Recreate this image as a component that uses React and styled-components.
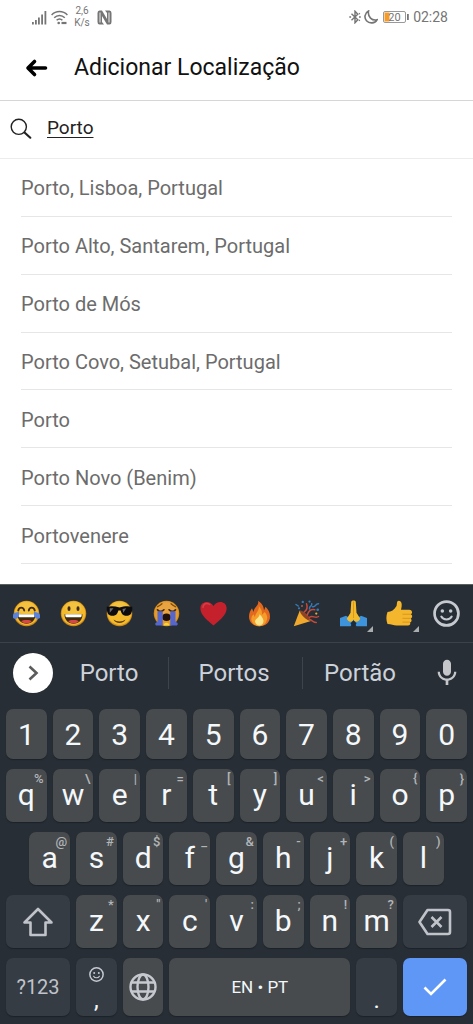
import { useState } from "react";
import styled, { createGlobalStyle } from "styled-components";
import { MdMic } from "react-icons/md";

const GlobalStyle = createGlobalStyle`
  * {
    box-sizing: border-box;
  }
  body {
    margin: 0;
    background: #fff;
    font-family: Roboto, "Liberation Sans", sans-serif;
  }
  button, input {
    font-family: inherit;
    border: 0;
    padding: 0;
    margin: 0;
    background: none;
    outline: none;
  }
  svg {
    display: block;
    flex: none;
  }
`;

const Page = styled.div`
  min-height: 100vh;
  display: flex;
  flex-direction: column;
`;

const StatusBar = styled.div`
  height: 34px;
  padding: 0 25px 0 32px;
  display: flex;
  align-items: center;
  justify-content: space-between;
  color: #757575;
`;

const StatusGroup = styled.div`
  display: flex;
  align-items: center;
  gap: ${(p) => p.$gap}px;
`;

const Speed = styled.div`
  width: 16px;
  margin: 0 3px 0 2px;
  font-size: 10px;
  line-height: 12px;
  text-align: center;
`;

const Clock = styled.time`
  font-size: 14px;
  line-height: 16px;
`;

const Header = styled.header`
  height: 67px;
  padding: 2px 25px 0;
  display: flex;
  align-items: center;
  gap: 25px;
  border-bottom: 1px solid #d6d6d6;
`;

const BackButton = styled.button`
  color: #000;
`;

const Title = styled.h1`
  margin: 0;
  font-size: 23px;
  line-height: 32px;
  font-weight: 400;
  color: #111;
`;

const SearchBar = styled.label`
  height: 58px;
  padding: 0 10px 2px;
  display: flex;
  align-items: center;
  gap: 15px;
  border-bottom: 1px solid #ececec;
`;

const SearchInput = styled.input`
  flex: 1;
  min-width: 0;
  height: 32px;
  padding-bottom: 2px;
  font-size: 19px;
  color: #222;
  text-decoration: underline;
  text-decoration-thickness: 1px;
  text-underline-offset: 3px;
`;

const Results = styled.ul`
  flex: 1;
  margin: 0;
  padding: 0 21px 20px;
  list-style: none;
  display: flex;
  flex-direction: column;
`;

const Result = styled.li`
  flex: 1;
  display: flex;
  border-bottom: 1px solid #e6e6e6;
`;

const ResultButton = styled.button`
  flex: 1;
  min-height: 48px;
  padding-top: 2px;
  font-size: 20px;
  text-align: left;
  color: #6c6c6c;
`;

const Keyboard = styled.section`
  background: #272e35;
  border-top: 1px solid #59605f;
`;

const EmojiBar = styled.div`
  height: 58px;
  padding: 0 6px;
  display: grid;
  grid-template-columns: repeat(10, 1fr);
  column-gap: 6px;
  border-bottom: 1px solid #3b4249;
`;

const EmojiButton = styled.button`
  position: relative;
  display: flex;
  align-items: center;
  justify-content: center;
  color: #c6cad0;
`;

const MoreCorner = styled.span`
  position: absolute;
  right: 1px;
  bottom: 10px;
  border-left: 6px solid transparent;
  border-bottom: 6px solid #a9adb0;
`;

const SuggestionBar = styled.div`
  height: 60px;
  display: grid;
  grid-template-columns: 53px 115fr 134fr 118fr 53px;
  align-items: center;
`;

const ExpandButton = styled.button`
  width: 40px;
  height: 40px;
  margin-left: 13px;
  border-radius: 50%;
  background: #fff;
  display: flex;
  align-items: center;
  justify-content: center;
`;

const Suggestion = styled.button`
  height: 32px;
  padding-right: 3px;
  font-size: 24px;
  line-height: 32px;
  color: #cdd1da;

  & + & {
    border-left: 1px solid #3d444b;
  }
`;

const VoiceButton = styled.button`
  display: flex;
  justify-content: center;
  color: #c4c6ca;
`;

const Keys = styled.div`
  padding: 6px 6px 8px;
  display: flex;
  flex-direction: column;
  gap: 10px;
`;

const KeyRow = styled.div`
  height: ${(p) => p.$height || 53}px;
  display: grid;
  grid-template-columns: repeat(20, 1fr);
  column-gap: 6px;
`;

const tones = {
  plain: "#484b4e",
  dark: "#353c44",
  accent: "#5e97f6",
};

const Key = styled.button`
  position: relative;
  grid-column: ${(p) => (p.$start ? p.$start + " / " : "")} span ${(p) => p.$span || 2};
  display: flex;
  flex-direction: column;
  align-items: center;
  justify-content: center;
  border-radius: 7px;
  background: ${(p) => tones[p.$tone || "plain"]};
  box-shadow: 0 1px 1px #1c2228;
  color: ${(p) => p.$color || "#f4f8fa"};
  font-size: ${(p) => p.$size || 30}px;
  line-height: 36px;
`;

const Letter = styled.span`
  padding-bottom: 2px;
`;

const Digit = styled.span`
  padding-top: 2px;
`;

const Hint = styled.span`
  position: absolute;
  top: 2px;
  right: 3px;
  font-size: 13px;
  font-weight: 500;
  line-height: 16px;
  color: #b1b5b8;
`;

const Punctuation = styled.span`
  margin-top: auto;
  font-size: 24px;
  line-height: 32px;
`;

const CommaSmile = styled.span`
  padding-top: 9px;
  color: #c6cad0;
`;

const places = [
  "Porto, Lisboa, Portugal",
  "Porto Alto, Santarem, Portugal",
  "Porto de Mós",
  "Porto Covo, Setubal, Portugal",
  "Porto",
  "Porto Novo (Benim)",
  "Portovenere",
];

const suggestions = ["Porto", "Portos", "Portão"];

const digits = ["1", "2", "3", "4", "5", "6", "7", "8", "9", "0"];

const topRow = [
  ["q", "%"], ["w", "\\"], ["e", "|"], ["r", "="], ["t", "["],
  ["y", "]"], ["u", "<"], ["i", ">"], ["o", "{"], ["p", "}"],
];

const homeRow = [
  ["a", "@"], ["s", "#"], ["d", "$"], ["f", "_"], ["g", "&"],
  ["h", "-"], ["j", "+"], ["k", "("], ["l", ")"],
];

const bottomRow = [
  ["z", "*"], ["x", '"'], ["c", "'"], ["v", ":"], ["b", ";"],
  ["n", "!"], ["m", "?"],
];

const Face = ({ color = "#f3bb2c" }) => (
  <>
    <circle cx="18" cy="18" r="17" fill="#cf8a1c" />
    <circle cx="18" cy="17.5" r="15.800" fill={color} />
    <ellipse cx="18" cy="11" rx="11" ry="8" fill="#fff" opacity=".1" />
  </>
);

const Grin = () => (
  <>
    <path d="M6 19h24c0 8-5 12.500-12 12.500S6 27 6 19z" fill="#422b0d" />
    <path d="M7 19h22c0 2.500-.500 4-1.500 4h-19C7.500 23 7 21.500 7 19z" fill="#fff" />
    <path d="M11 28.500c2-2.500 12-2.500 14 0-4 3.500-10 3.500-14 0z" fill="#d9464a" />
  </>
);

const emojis = [
  {
    name: "Lágrimas de alegria",
    art: (
      <>
        <Face />
        <Grin />
        <path d="M7 14c1-5 7-5 8 0M21 14c1-5 7-5 8 0" fill="none" stroke="#422b0d" strokeWidth="2.4" strokeLinecap="round" />
        <path d="M8 16c-6 0-9 3-8.500 6.500S6 26.500 7.500 22c.600-2 .500-4 .500-6zM28 16c6 0 9 3 8.500 6.500S30 26.500 28.500 22c-.600-2-.500-4-.500-6z" fill="#5a82dc" />
      </>
    ),
  },
  {
    name: "Sorriso",
    art: (
      <>
        <Face />
        <Grin />
        <ellipse cx="12" cy="11.500" rx="2" ry="3.200" fill="#422b0d" />
        <ellipse cx="24" cy="11.500" rx="2" ry="3.200" fill="#422b0d" />
      </>
    ),
  },
  {
    name: "Óculos de sol",
    art: (
      <>
        <Face />
        <path d="M10 26c4 3.500 12 3.500 16 0-2 6-14 6-16 0z" fill="#5b3a10" />
        <path d="M1 9c5-1 11-1 17 1 6-2 12-2 17-1v4c-1 6-3 8-8 8-4.500 0-6.500-3-7.500-7h-3C15.500 18 13.500 21 9 21c-5 0-7-2-8-8z" fill="#0d0d0f" />
        <path d="M5 11l5 0-5 6zM22 12l5-1-4 6z" fill="#6b6b70" />
      </>
    ),
  },
  {
    name: "Choro",
    art: (
      <>
        <Face color="#e59a2c" />
        <path d="M6 9c2-1 4-2 6-4M30 9c-2-1-4-2-6-4" fill="none" stroke="#7a4a10" strokeWidth="1.600" strokeLinecap="round" />
        <path d="M6 13c2 3 6 3 8.500 0M21.500 13c2.500 3 6.500 3 8.500 0" fill="none" stroke="#422b0d" strokeWidth="2.200" strokeLinecap="round" />
        <ellipse cx="18" cy="23" rx="6" ry="5" fill="#201208" />
        <path d="M6 15h7v19H4c-2-2-1-4 2-5zM23 15h7v14c3 1 4 3 2 5h-9z" fill="#5566cc" />
        <path d="M14 34c0-5 8-5 8 0z" fill="#f8d440" />
      </>
    ),
  },
  {
    name: "Coração",
    art: (
      <>
        <path d="M18 34C7 25 .500 19 .500 11 .500 1.500 13-.500 18 8c5-8.500 17.500-6.500 17.500 3C35.500 19 29 25 18 34z" fill="#c5212d" />
        <path d="M4 10c0-5 5-7 9-4" fill="none" stroke="#d23f48" strokeWidth="2" strokeLinecap="round" />
      </>
    ),
  },
  {
    name: "Fogo",
    art: (
      <>
        <path d="M16 1c5 3 8 8 8 13l2-5c4 4 6 8 6 13 0 8-6 13-14 13S4 30 4 22c0-5 2-8 4-11l2 5C11 9 18 7 16 1z" fill="#e2681f" />
        <path d="M17 8c4 5 5 8 4 12l4-4c3 4 4 7 3 10-1 5-5 9-10 9S8 32 7 26c0-3 1-5 3-7l2 4c0-6 6-8 5-15z" fill="#f59b28" />
        <path d="M18 19c5 5 6 8 5 11-1 3-3 4-5 4s-5-1-6-5c0-4 6-5 6-10z" fill="#fbe58c" />
      </>
    ),
  },
  {
    name: "Festa",
    art: (
      <>
        <path d="M9 14l15 14L1 35z" fill="#f0a92d" />
        <path d="M9 14c5 0 15 9 15 14-5 0-15-9-15-14z" fill="#8d4424" />
        <path d="M15 16c4-3 5-6 3-11M19 20c2-6 5-8 10-7M22 23c4-3 8 2 12-1M22 26c4 1 5 4 9 4" fill="none" stroke="#c64a3a" strokeWidth="2" strokeLinecap="round" />
        <path d="M22 12c-1-5 4-3 3-7M26 9c5 1 3-4 8-4M4 6l3 2" fill="none" stroke="#3579b8" strokeWidth="2" strokeLinecap="round" />
        <g fill="#3579b8">
          <circle cx="13" cy="2.500" r="1.600" />
          <circle cx="8" cy="11" r="1.500" />
          <circle cx="33" cy="13" r="1.800" />
          <circle cx="22" cy="2" r="1.500" />
        </g>
        <circle cx="31" cy="18" r="1.500" fill="#f0a92d" />
        <circle cx="12" cy="8" r="1.400" fill="#c64a3a" />
      </>
    ),
  },
  {
    name: "Mãos juntas",
    more: true,
    art: (
      <>
        <path d="M0 24l8-3 10 6 10-6 8 3v11H22l-4-5-4 5H0z" fill="#3d93dc" />
        <path d="M15 2c1-2 5-2 6 0l1 15 5 8c-2 4-5 5-8 3l-1-2-1 2c-3 2-6 1-8-3l5-8z" fill="#f3bb2c" />
        <path d="M18 2v22" stroke="#d8961c" strokeWidth="1.200" />
        <path d="M14 31l4-4 4 4-2 4h-4z" fill="#1d2a3a" />
      </>
    ),
  },
  {
    name: "Gosto",
    more: true,
    art: (
      <>
        <path d="M2 16c5 0 9-3 12-8 1-3 0-7 3-7 4 0 5 5 3 12h11c4 0 5 5 2 6 3 1 2 5 0 6 2 1 1 5-1 5 1 2 0 4-3 4H14c-4 0-7-2-12-2-2-5-2-11 0-16z" fill="#f3b62c" />
        <path d="M22 19h11M22 24.500h11M22 29.500h10" stroke="#d8961c" strokeWidth="1.300" />
      </>
    ),
  },
];

const SmileIcon = ({ size }) => (
  <svg width={size} height={size} viewBox="0 0 26 26" fill="none" stroke="currentColor" strokeWidth="2.600">
    <circle cx="13" cy="13" r="11.500" />
    <path d="M8 16c2 3.600 8 3.600 10 0" strokeWidth="2" strokeLinecap="round" />
    <circle cx="9" cy="10.500" r="1.700" fill="currentColor" stroke="none" />
    <circle cx="17" cy="10.500" r="1.700" fill="currentColor" stroke="none" />
  </svg>
);

const LetterKey = ({ letter, hint, start }) => (
  <Key type="button" $start={start}>
    <Letter>{letter}</Letter>
    <Hint>{hint}</Hint>
  </Key>
);

const Status = () => (
  <StatusBar>
    <StatusGroup $gap={4}>
      <svg width="15" height="15" viewBox="0 0 15 15" fill="currentColor">
        <path d="M0 12h1.800v2.500H0zM3 10h1.800v4.500H3zM6 7.500h1.800v7H6zM9.200 4.500H11v10H9.200zM12.500 1h1.800v13.500h-1.800z" />
      </svg>
      <svg width="17" height="15" viewBox="0 0 17 15" fill="none" stroke="currentColor" strokeWidth="1.500">
        <path d="M.600 5C5 .300 12 .300 16.400 5M3.200 7.800c3-3.200 7.600-3.200 10.600 0M5.600 10.300c1.800-1.800 4-1.800 5.800 0" />
        <circle cx="7.700" cy="13" r="1.300" fill="currentColor" stroke="none" />
        <path d="M10.500 13h5" strokeWidth="2.200" />
      </svg>
      <Speed>2,6 K/s</Speed>
      <svg width="15" height="15" viewBox="0 0 15 15" fill="currentColor">
        <path d="M2.500.500H5l5 8.500V3l-2-2.500h4.500q2 0 2 2.500v9q0 2.500-2 2.500H10L5 6v6l2 2.500H2.500q-2 0-2-2.500V3q0-2.500 2-2.500z" />
        <path d="M3 2.500v10M12 2.500v10" stroke="#fff" strokeWidth=".9" />
      </svg>
    </StatusGroup>
    <StatusGroup $gap={3}>
      <svg width="12" height="14" viewBox="0 0 12 14" fill="none" stroke="currentColor" strokeWidth="1.400">
        <path d="M2.500 3.800l6.300 6-2.800 3V1.200l2.800 3-6.300 6" />
        <path d="M.300 7h1.800M10 7h1.800M10 4l.8-.8M10 10l.8.8" />
      </svg>
      <svg width="14" height="14" viewBox="0 0 14 14" fill="none" stroke="currentColor" strokeWidth="1.600">
        <path d="M4.500 1C.500 3 0 8 2.500 10.700 5.500 14 11 13.500 13 9.800 8 11 3.500 7 4.500 1z" />
      </svg>
      <svg width="29" height="14" viewBox="2 0 29 14">
        <rect x="4.500" y="1.500" width="22" height="11" rx="1.500" fill="#fff" stroke="#999" />
        <path d="M5.500 2.500h5v9h-5z" fill="#f49b28" />
        <path d="M28 4h1.800v6H28z" fill="#777" />
        <text x="15.500" y="11" fontSize="11" textAnchor="middle" fill="#757575">20</text>
      </svg>
      <Clock>02:28</Clock>
    </StatusGroup>
  </StatusBar>
);

const App = () => {
  const [query, queryChange] = useState("Porto");

  return (
    <Page>
      <GlobalStyle />
      <Status />
      <Header>
        <BackButton type="button" aria-label="Voltar">
          <svg width="24" height="20" viewBox="0 0 24 20" fill="none" stroke="currentColor" strokeWidth="3.600" strokeLinecap="round" strokeLinejoin="round">
            <path d="M20.500 10H3.500M9.500 3.500L3 10l6.500 6.500" />
          </svg>
        </BackButton>
        <Title>Adicionar Localização</Title>
      </Header>
      <SearchBar>
        <svg width="22" height="22" viewBox="0 0 22 22" fill="none" stroke="#222">
          <circle cx="8.800" cy="8.800" r="7.600" strokeWidth="1.400" />
          <path d="M14.500 14.500l5.800 5.200" strokeWidth="2.200" strokeLinecap="round" />
        </svg>
        <SearchInput aria-label="Procurar" value={query} onChange={(e) => queryChange(e.target.value)} />
      </SearchBar>
      <Results>
        {places.map((place) => (
          <Result key={place}>
            <ResultButton type="button" onClick={() => queryChange(place)}>{place}</ResultButton>
          </Result>
        ))}
      </Results>

      <Keyboard>
        <EmojiBar>
          {emojis.map((emoji) => (
            <EmojiButton key={emoji.name} type="button" aria-label={emoji.name}>
              <svg width="27" height="27" viewBox="0 0 36 36">{emoji.art}</svg>
              {emoji.more && <MoreCorner />}
            </EmojiButton>
          ))}
          <EmojiButton type="button" aria-label="Mais emojis">
            <SmileIcon size={27} />
          </EmojiButton>
        </EmojiBar>

        <SuggestionBar>
          <ExpandButton type="button" aria-label="Expandir">
            <svg width="16" height="20" viewBox="0 0 16 20" fill="none" stroke="#5c5c5c" strokeWidth="2.600">
              <path d="M4.500 3.500L11.500 10l-7 6.500" />
            </svg>
          </ExpandButton>
          {suggestions.map((word) => (
            <Suggestion key={word} type="button" onClick={() => queryChange(word)}>{word}</Suggestion>
          ))}
          <VoiceButton type="button" aria-label="Voz">
            <MdMic size={32} />
          </VoiceButton>
        </SuggestionBar>

        <Keys>
          <KeyRow $height={50}>
            {digits.map((digit) => (
              <Key key={digit} type="button"><Digit>{digit}</Digit></Key>
            ))}
          </KeyRow>
          <KeyRow>
            {topRow.map(([letter, hint]) => (
              <LetterKey key={letter} letter={letter} hint={hint} />
            ))}
          </KeyRow>
          <KeyRow>
            {homeRow.map(([letter, hint], i) => (
              <LetterKey key={letter} letter={letter} hint={hint} start={i === 0 ? 2 : undefined} />
            ))}
          </KeyRow>
          <KeyRow>
            <Key type="button" aria-label="Maiúsculas" $span={3} $tone="dark" $color="#c0c3c9">
              <svg width="32" height="30" viewBox="0 0 32 30" fill="none" stroke="currentColor" strokeWidth="2.600" strokeLinejoin="round">
                <path d="M16 2L2.500 15.500H8.500V28h15V15.500h6z" />
              </svg>
            </Key>
            {bottomRow.map(([letter, hint]) => (
              <LetterKey key={letter} letter={letter} hint={hint} />
            ))}
            <Key type="button" aria-label="Apagar" $span={3} $tone="dark" $color="#c0c3c9">
              <svg width="34" height="28" viewBox="0 0 34 28" fill="none" stroke="currentColor" strokeWidth="2.600" strokeLinejoin="round">
                <path d="M9.500 2H30q2 0 2 2v20q0 2-2 2H9.500L1.500 14z" />
                <path d="M13.500 9l10 10M23.500 9l-10 10" />
              </svg>
            </Key>
          </KeyRow>
          <KeyRow $height={58}>
            <Key type="button" $span={3} $tone="dark" $size={20} $color="#c0c3c9">?123</Key>
            <Key type="button" $tone="dark">
              <CommaSmile><SmileIcon size={15} /></CommaSmile>
              <Punctuation>,</Punctuation>
            </Key>
            <Key type="button" aria-label="Idioma" $color="#c6cad0">
              <svg width="28" height="28" viewBox="0 0 28 28" fill="none" stroke="currentColor" strokeWidth="2.400">
                <circle cx="14" cy="14" r="12.500" />
                <ellipse cx="14" cy="14" rx="5.500" ry="12.500" />
                <path d="M2.500 9.500h23M2.500 18.500h23" />
              </svg>
            </Key>
            <Key type="button" $span={8} $size={17}>EN • PT</Key>
            <Key type="button" $tone="dark"><Punctuation>.</Punctuation></Key>
            <Key type="button" aria-label="Concluir" $span={3} $tone="accent">
              <svg width="26" height="20" viewBox="0 0 26 20" fill="none" stroke="#fff" strokeWidth="2.600">
                <path d="M2.500 10.500l6.500 6.500L23.500 2.500" />
              </svg>
            </Key>
          </KeyRow>
        </Keys>
      </Keyboard>
    </Page>
  );
};

export default App;
